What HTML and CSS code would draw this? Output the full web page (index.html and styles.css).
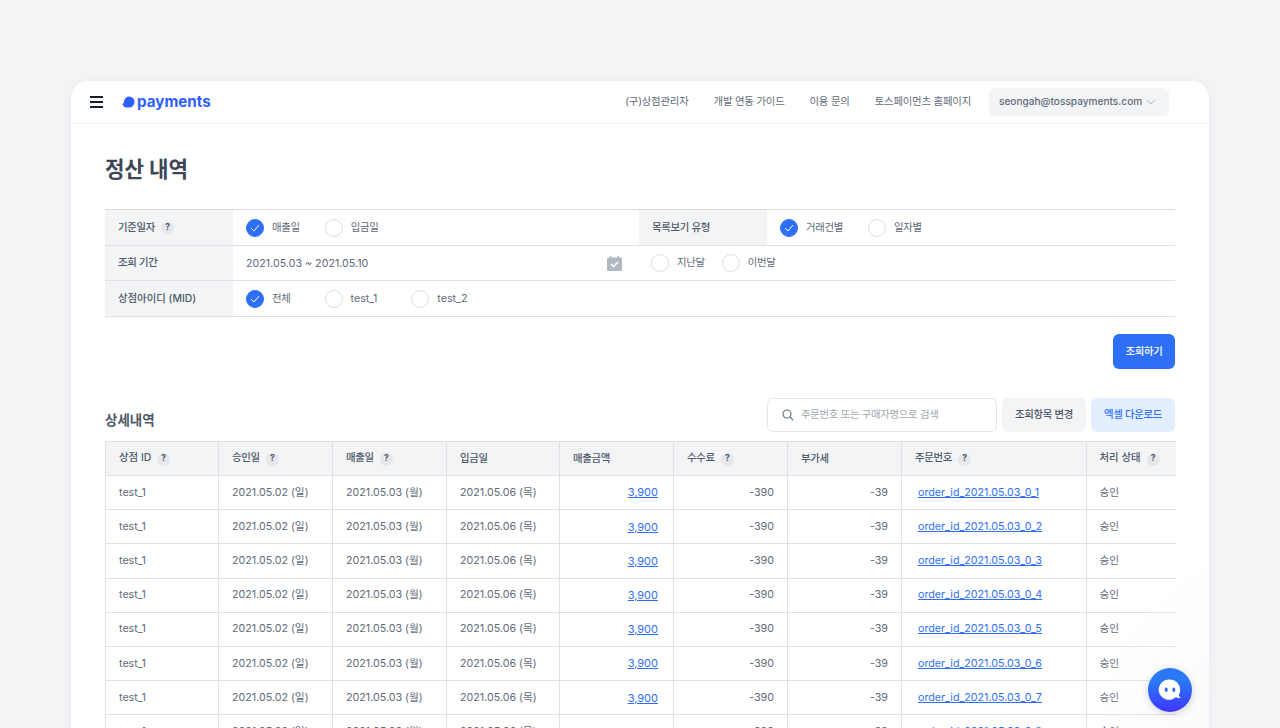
FILE: index.html
```html
<!DOCTYPE html>
<html lang="ko">
<head>
<meta charset="utf-8">
<title>정산 내역</title>
<link rel="stylesheet" href="styles.css">
</head>
<body>
<div class="card">
  <header class="topbar">
    <div class="menu"><span></span><span></span><span></span></div>
    <div class="logo">
      <svg class="logo-mark" width="13" height="12" viewBox="0 0 13 12"><path d="M7 .5a5.5 5.5 0 0 1 5.500 5.500A5.500 5.500 0 0 1 7 11.500H4.200C2.600 11.500 1.400 10.500 1.300 9.200 .900 9 .4 8.500.4 7.900c0-.3.300-.5.600-.5.400 0 .7-.2.800-.6C2.200 3.200 3.900.5 7 .5z" fill="#2f5fff"/></svg>
      <span>payments</span>
    </div>
    <nav class="nav">
      <a>(구)상점관리자</a><a>개발 연동 가이드</a><a>이용 문의</a><a>토스페이먼츠 홈페이지</a>
    </nav>
    <div class="account">seongah@tosspayments.com
      <svg width="10" height="6" viewBox="0 0 10 6"><path d="M1 1l4 4 4-4" fill="none" stroke="#b0b8c1" stroke-width="1"/></svg>
    </div>
  </header>
  <main class="content">
    <h1 class="title">정산 내역</h1>
    <section class="filter">
      <div class="frow r1">
        <div class="flabel">기준일자<i class="q">?</i></div>
        <div class="fval w406">
          <label class="radio on"><b><svg width="10" height="8" viewBox="0 0 10 8"><path d="M1 4l3 3 5-6" fill="none" stroke="#fff"/></svg></b>매출일</label>
          <label class="radio"><b></b>입금일</label>
        </div>
        <div class="flabel">목록보기 유형</div>
        <div class="fval">
          <label class="radio on"><b><svg width="10" height="8" viewBox="0 0 10 8"><path d="M1 4l3 3 5-6" fill="none" stroke="#fff"/></svg></b>거래건별</label>
          <label class="radio"><b></b>일자별</label>
        </div>
      </div>
      <div class="frow r2">
        <div class="flabel">조회 기간</div>
        <div class="fval date">
          <span class="range">2021.05.03 ~ 2021.05.10</span>
          <svg class="cal" width="15" height="15" viewBox="0 0 15 15"><path d="M3 0h1.500v1.500h6V0H12v1.500h1.500A1.500 1.500 0 0 1 15 3v10.500a1.500 1.500 0 0 1-1.500 1.500h-12A1.500 1.500 0 0 1 0 13.500V3a1.500 1.500 0 0 1 1.500-1.500H3z" fill="#b0b8c1"/><path d="M4 8l2.500 2.500L11 6" fill="none" stroke="#fff" stroke-width="1.700"/></svg>
          <label class="radio tight"><b></b>지난달</label>
          <label class="radio tight"><b></b>이번달</label>
        </div>
      </div>
      <div class="frow r3">
        <div class="flabel plain">상점아이디 (MID)</div>
        <div class="fval wide">
          <label class="radio on"><b><svg width="10" height="8" viewBox="0 0 10 8"><path d="M1 4l3 3 5-6" fill="none" stroke="#fff"/></svg></b>전체</label>
          <label class="radio latin"><b></b>test_1</label>
          <label class="radio latin"><b></b>test_2</label>
        </div>
      </div>
    </section>
    <div class="actions"><button class="btn primary">조회하기</button></div>
    <div class="tools">
      <h2 class="subtitle">상세내역</h2>
      <div class="search">
        <svg width="12" height="12" viewBox="0 0 12 12"><circle cx="5" cy="5" r="4" fill="none" stroke="#6b7684" stroke-width="1.200"/><path d="M8 8l3.300 3.300" stroke="#6b7684" stroke-width="1.200"/></svg>
        <span>주문번호 또는 구매자명으로 검색</span>
      </div>
      <button class="btn gray">조회항목 변경</button>
      <button class="btn light">엑셀 다운로드</button>
    </div>
    <table class="grid">
      <colgroup><col class="c1"><col class="c2"><col class="c3"><col class="c4"><col class="c5"><col class="c6"><col class="c7"><col class="c8"><col class="c9"></colgroup>
      <thead>
        <tr><th class="plain">상점 ID<i class="q">?</i></th><th>승인일<i class="q">?</i></th><th>매출일<i class="q">?</i></th><th>입금일</th><th>매출금액</th><th>수수료<i class="q">?</i></th><th>부가세</th><th>주문번호<i class="q">?</i></th><th class="plain">처리 상태<i class="q">?</i></th></tr>
      </thead>
      <tbody>
        <tr><td>test_1</td><td>2021.05.02 (일)</td><td>2021.05.03 (월)</td><td>2021.05.06 (목)</td><td class="num link"><a>3,900</a></td><td class="num">-390</td><td class="num">-39</td><td class="order"><a>order_id_2021.05.03_0_1</a></td><td>승인</td></tr>
        <tr><td>test_1</td><td>2021.05.02 (일)</td><td>2021.05.03 (월)</td><td>2021.05.06 (목)</td><td class="num link"><a>3,900</a></td><td class="num">-390</td><td class="num">-39</td><td class="order"><a>order_id_2021.05.03_0_2</a></td><td>승인</td></tr>
        <tr><td>test_1</td><td>2021.05.02 (일)</td><td>2021.05.03 (월)</td><td>2021.05.06 (목)</td><td class="num link"><a>3,900</a></td><td class="num">-390</td><td class="num">-39</td><td class="order"><a>order_id_2021.05.03_0_3</a></td><td>승인</td></tr>
        <tr><td>test_1</td><td>2021.05.02 (일)</td><td>2021.05.03 (월)</td><td>2021.05.06 (목)</td><td class="num link"><a>3,900</a></td><td class="num">-390</td><td class="num">-39</td><td class="order"><a>order_id_2021.05.03_0_4</a></td><td>승인</td></tr>
        <tr><td>test_1</td><td>2021.05.02 (일)</td><td>2021.05.03 (월)</td><td>2021.05.06 (목)</td><td class="num link"><a>3,900</a></td><td class="num">-390</td><td class="num">-39</td><td class="order"><a>order_id_2021.05.03_0_5</a></td><td>승인</td></tr>
        <tr><td>test_1</td><td>2021.05.02 (일)</td><td>2021.05.03 (월)</td><td>2021.05.06 (목)</td><td class="num link"><a>3,900</a></td><td class="num">-390</td><td class="num">-39</td><td class="order"><a>order_id_2021.05.03_0_6</a></td><td>승인</td></tr>
        <tr><td>test_1</td><td>2021.05.02 (일)</td><td>2021.05.03 (월)</td><td>2021.05.06 (목)</td><td class="num link"><a>3,900</a></td><td class="num">-390</td><td class="num">-39</td><td class="order"><a>order_id_2021.05.03_0_7</a></td><td>승인</td></tr>
        <tr><td>test_1</td><td>2021.05.02 (일)</td><td>2021.05.03 (월)</td><td>2021.05.06 (목)</td><td class="num link"><a>3,900</a></td><td class="num">-390</td><td class="num">-39</td><td class="order"><a>order_id_2021.05.03_0_8</a></td><td>승인</td></tr>
      </tbody>
    </table>
  </main>
</div>
<div class="fade"></div>
<div class="chat">
  <svg width="26" height="26" viewBox="0 0 26 26"><path d="M13 2.500a10.200 10.200 0 0 1 10.200 10.200c0 2-.5 3.700-1.500 5.200.2 1 .8 1.900 1.700 2.700.2.200 0 .5-.2.500-1.700.2-3.200-.2-4.300-1A10.200 10.200 0 1 1 13 2.500z" fill="#fff"/><ellipse cx="9.200" cy="12.700" rx="1.500" ry="2.300" fill="#2f6bf5"/><ellipse cx="16.800" cy="12.700" rx="1.500" ry="2.300" fill="#2f6bf5"/></svg>
</div>
</body>
</html>
```

FILE: styles.css
```css
* { box-sizing: border-box; }
html, body { height: 100%; }
body {
  margin: 0;
  height: 728px;
  overflow: hidden;
  padding: 81px 71px 0;
  background: #f3f4f6;
  color: #5f6b78;
  font: 400 10.7px/1.3 Inter, "Noto Sans CJK KR", sans-serif;
}
.card {
  width: 1138px;
  height: 760px;
  background: #fff;
  border-radius: 17px 17px 0 0;
  box-shadow: 0 2px 12px rgba(0, 27, 55, .05);
  overflow: hidden;
}
.topbar {
  height: 43px;
  border-bottom: 1px solid #f0f1f3;
  display: flex;
  align-items: center;
  padding: 0 40px 0 19px;
}
.menu { display: flex; flex-direction: column; gap: 3px; width: 13px; }
.menu span { height: 2px; background: #191f28; display: block; }
.logo { display: flex; align-items: center; gap: 2px; margin-left: 19px; color: #2f5fff; font-size: 15.200px; font-weight: 700; }
.nav { display: flex; gap: 25px; margin-left: auto; font-size: 10.400px; letter-spacing: -.2px; }
.nav a { color: #5f6b78; }
.account {
  margin-left: 18px;
  width: 180px;
  height: 28px;
  background: #f2f4f6;
  border-radius: 6px;
  display: flex;
  align-items: center;
  gap: 4px;
  padding-left: 10px;
  font-size: 10.100px;
  font-weight: 500;
}
.content { padding: 0 34px; }
.title { margin: 0; padding-top: 29px; height: 85px; font-size: 21.200px; line-height: 33px; font-weight: 700; color: #3d4654; }
.filter { border-top: 1px solid #d9dcdf; }
.frow { display: flex; border-bottom: 1px solid #dfe1e4; }
.r1 { height: 36px; }
.r2 { height: 35px; }
.r3 { height: 36px; }
.flabel {
  width: 128px;
  flex: none;
  background: #f2f4f6;
  display: flex;
  align-items: center;
  padding-left: 13px;
  color: #4e5968;
  font-size: 10.400px;
  letter-spacing: -.3px;
  font-weight: 500;
}
.grid th.plain, .flabel.plain { letter-spacing: 0; }
.fval { flex: 1; display: flex; align-items: center; padding-left: 13px; gap: 25px; }
.w406 { flex: none; width: 406px; }
.wide { gap: 34px; }
.radio { display: flex; align-items: center; gap: 8px; font-size: 10.400px; letter-spacing: -.3px; }
.radio.latin { font-size: 10.700px; letter-spacing: 0; }
.radio b {
  width: 18px;
  height: 18px;
  border: 1px solid #d9dfe5;
  border-radius: 50%;
  display: flex;
  align-items: center;
  justify-content: center;
  background: #fff;
}
.radio.on b { background: #2f6ff6; border-color: #2f6ff6; }
.date { gap: 0; }
.range { width: 361px; padding-top: 1px; }
.cal { flex: none; }
.radio.tight { margin-left: 29px; }
.radio.tight + .radio.tight { margin-left: 17px; }
.q {
  display: inline-flex;
  align-items: center;
  justify-content: center;
  width: 13px;
  height: 13px;
  margin-left: 6px;
  border-radius: 50%;
  background: #e5e8eb;
  color: #4e5968;
  font-size: 8.500px;
  letter-spacing: 0;
  font-style: normal;
  font-weight: 700;
}
.actions { display: flex; justify-content: flex-end; padding-top: 17px; }
.btn { border: 0; border-radius: 6px; font: inherit; font-size: 10.400px; letter-spacing: -.3px; font-weight: 500; padding: 0; }
.primary { width: 62px; height: 35px; background: #2f6ff6; color: #fff; }
.tools { display: flex; align-items: center; margin-top: 29px; height: 34px; gap: 5px; }
.subtitle { margin: 12px auto 0 0; font-size: 13.500px; font-weight: 700; color: #4e5968; }
.search {
  width: 230px;
  height: 34px;
  border: 1px solid #e5e8eb;
  border-radius: 6px;
  display: flex;
  align-items: center;
  gap: 7px;
  padding-left: 14px;
  color: #a0a8b2;
  font-size: 10.400px;
  letter-spacing: -.3px;
}
.gray { width: 84px; height: 34px; background: #f2f4f6; color: #4e5968; }
.light { width: 84px; height: 34px; background: #e3efff; color: #2f6ff6; }
.grid {
  margin-top: 9px;
  width: 1070px;
  table-layout: fixed;
  border-collapse: collapse;
}
.c1 { width: 113px; } .c2 { width: 114px; } .c3 { width: 114px; } .c4 { width: 113px; }
.c5 { width: 114px; } .c6 { width: 114px; } .c7 { width: 114px; } .c8 { width: 184.500px; } .c9 { width: 89.500px; }
.grid th, .grid td {
  height: 34.200px;
  padding: 0 13px;
  text-align: left;
  white-space: nowrap;
  border: 1px solid #dfe1e4;
  font-weight: 400;
}
.grid th { background: #f2f4f6; height: 34px; color: #4e5968; font-size: 10.400px; letter-spacing: -.3px; font-weight: 500; }
.grid tr > :last-child { border-right: 0; }
.grid .num { text-align: right; }
.grid .num.link { padding-right: 15px; font-size: 11px; }
.grid a { color: #2f6ff6; text-decoration: underline; }
.grid .order { padding-left: 16px; }
.fade {
  position: absolute;
  right: 0;
  bottom: 0;
  width: 200px;
  height: 190px;
  background: radial-gradient(circle at 100% 100%, rgba(243, 244, 246, .55), rgba(243, 244, 246, 0) 70%);
  pointer-events: none;
}
.chat {
  position: absolute;
  left: 1148px;
  top: 668px;
  width: 44px;
  height: 44px;
  border-radius: 50%;
  background: linear-gradient(180deg, #2a78f5 30%, #3f35ff 100%);
  box-shadow: 0 2px 8px rgba(0, 27, 55, .18);
  display: flex;
  align-items: center;
  justify-content: center;
}
```
